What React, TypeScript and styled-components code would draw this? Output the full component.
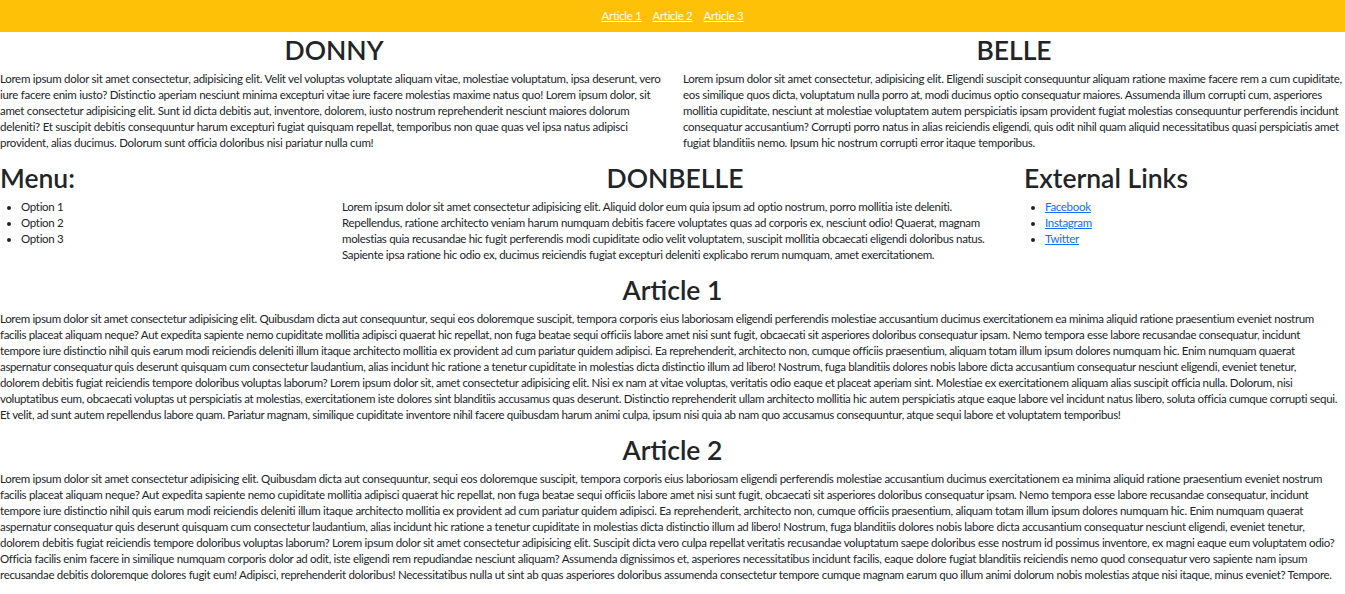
import React from "react";
import styled, { createGlobalStyle } from "styled-components";

const GlobalStyle = createGlobalStyle`
  html, body {
    margin: 0;
    padding: 0;
    background: #ffffff;
  }
  body {
    font-family: "Lato", "Liberation Sans", sans-serif;
    font-size: 11.5px;
    letter-spacing: -0.31px;
    line-height: 16px;
    color: #212529;
  }
`;

const Navbar = styled.nav`
  height: 32px;
  background: #ffc107;
  display: flex;
  justify-content: center;
  align-items: center;
  gap: 11px;
`;

const NavLink = styled.a`
  color: #ffffff;
  text-decoration: underline;
  font-size: 11.5px;
`;

const Main = styled.main`
  display: flex;
  flex-direction: column;
  gap: 10px;
  padding-top: 1px;
`;

const TwoCol = styled.div`
  display: grid;
  grid-template-columns: 668px 1fr;
  column-gap: 15px;
`;

const ThreeCol = styled.div`
  display: grid;
  grid-template-columns: 326px 666px 1fr;
  column-gap: 16px;
`;

const Section = styled.section`
  display: flex;
  flex-direction: column;
  gap: 4px;
  min-width: 0;
`;

const Heading = styled.h2<{ $align?: "left" | "center" }>`
  margin: 0;
  font-size: 26.5px;
  line-height: 34px;
  font-weight: 600;
  letter-spacing: 0;
  text-align: ${(p) => p.$align ?? "center"};
  color: #212529;
`;

const Text = styled.p<{ $tracking?: number }>`
  margin: 0;
  letter-spacing: ${(p) => p.$tracking ?? -0.31}px;
`;

const List = styled.ul`
  margin: 0;
  padding-left: 21px;
`;

const Item = styled.li``;

const ExtLink = styled.a`
  color: #0d6efd;
  text-decoration: underline;
`;

const DONNY =
  "Lorem ipsum dolor sit amet consectetur, adipisicing elit. Velit vel voluptas voluptate aliquam vitae, molestiae voluptatum, ipsa deserunt, vero iure facere enim iusto? Distinctio aperiam nesciunt minima excepturi vitae iure facere molestias maxime natus quo! Lorem ipsum dolor, sit amet consectetur adipisicing elit. Sunt id dicta debitis aut, inventore, dolorem, iusto nostrum reprehenderit nesciunt maiores dolorum deleniti? Et suscipit debitis consequuntur harum excepturi fugiat quisquam repellat, temporibus non quae quas vel ipsa natus adipisci provident, alias ducimus. Dolorum sunt officia doloribus nisi pariatur nulla cum!";

const BELLE =
  "Lorem ipsum dolor sit amet consectetur, adipisicing elit. Eligendi suscipit consequuntur aliquam ratione maxime facere rem a cum cupiditate, eos similique quos dicta, voluptatum nulla porro at, modi ducimus optio consequatur maiores. Assumenda illum corrupti cum, asperiores mollitia cupiditate, nesciunt at molestiae voluptatem autem perspiciatis ipsam provident fugiat molestias consequuntur perferendis incidunt consequatur accusantium? Corrupti porro natus in alias reiciendis eligendi, quis odit nihil quam aliquid necessitatibus quasi perspiciatis amet fugiat blanditiis nemo. Ipsum hic nostrum corrupti error itaque temporibus.";

const DONBELLE =
  "Lorem ipsum dolor sit amet consectetur adipisicing elit. Aliquid dolor eum quia ipsum ad optio nostrum, porro mollitia iste deleniti. Repellendus, ratione architecto veniam harum numquam debitis facere voluptates quas ad corporis ex, nesciunt odio! Quaerat, magnam molestias quia recusandae hic fugit perferendis modi cupiditate odio velit voluptatem, suscipit mollitia obcaecati eligendi doloribus natus. Sapiente ipsa ratione hic odio ex, ducimus reiciendis fugiat excepturi deleniti explicabo rerum numquam, amet exercitationem.";

const COMMON =
  "Lorem ipsum dolor sit amet consectetur adipisicing elit. Quibusdam dicta aut consequuntur, sequi eos doloremque suscipit, tempora corporis eius laboriosam eligendi perferendis molestiae accusantium ducimus exercitationem ea minima aliquid ratione praesentium eveniet nostrum facilis\u00a0placeat aliquam neque? Aut expedita sapiente nemo cupiditate mollitia adipisci quaerat hic repellat, non fuga beatae sequi officiis labore amet nisi sunt fugit, obcaecati sit asperiores doloribus consequatur ipsam. Nemo tempora esse labore recusandae consequatur, incidunt tempore\u00a0iure distinctio nihil quis earum modi reiciendis deleniti illum itaque architecto mollitia ex provident ad cum pariatur quidem adipisci. Ea reprehenderit, architecto non, cumque officiis praesentium, aliquam totam illum ipsum dolores numquam hic. Enim numquam quaerat aspernatur consequatur quis deserunt quisquam cum consectetur laudantium, alias incidunt hic ratione a tenetur cupiditate in molestias dicta distinctio illum ad libero! Nostrum, fuga blanditiis dolores nobis labore dicta accusantium consequatur nesciunt eligendi, eveniet tenetur, dolorem\u00a0debitis fugiat reiciendis tempore doloribus voluptas laborum? ";

const ARTICLE1 =
  COMMON +
  "Lorem ipsum dolor sit, amet consectetur adipisicing elit. Nisi ex nam at vitae voluptas, veritatis odio eaque et placeat aperiam sint. Molestiae ex exercitationem aliquam alias suscipit officia nulla. Dolorum, nisi voluptatibus eum, obcaecati voluptas ut perspiciatis at molestias, exercitationem iste dolores sint blanditiis accusamus quas deserunt. Distinctio reprehenderit ullam architecto mollitia hic autem perspiciatis atque eaque labore vel incidunt natus libero, soluta officia cumque corrupti sequi. Et velit, ad sunt autem repellendus labore quam. Pariatur magnam, similique cupiditate inventore nihil facere quibusdam harum animi culpa, ipsum nisi quia ab nam quo accusamus consequuntur, atque sequi labore et voluptatem temporibus!";

const ARTICLE2 =
  COMMON +
  "Lorem ipsum dolor sit amet consectetur adipisicing elit. Suscipit dicta vero culpa repellat veritatis recusandae voluptatum saepe doloribus esse nostrum id possimus inventore, ex magni eaque eum voluptatem odio? Officia facilis enim facere in similique numquam corporis dolor ad odit, iste eligendi rem repudiandae nesciunt aliquam? Assumenda dignissimos et, asperiores necessitatibus incidunt facilis, eaque dolore fugiat blanditiis reiciendis nemo quod consequatur vero sapiente nam ipsum recusandae debitis doloremque dolores fugit eum! Adipisci, reprehenderit doloribus! Necessitatibus nulla ut sint ab quas asperiores doloribus assumenda consectetur tempore cumque magnam earum quo illum animi dolorum nobis molestias atque nisi itaque, minus eveniet? Tempore.";

export default function App() {
  return (
    <>
      <GlobalStyle />
      <Navbar>
        <NavLink href="#article1">Article 1</NavLink>
        <NavLink href="#article2">Article 2</NavLink>
        <NavLink href="#article3">Article 3</NavLink>
      </Navbar>
      <Main>
        <TwoCol>
          <Section>
            <Heading>DONNY</Heading>
            <Text $tracking={-0.28}>{DONNY}</Text>
          </Section>
          <Section>
            <Heading>BELLE</Heading>
            <Text>{BELLE}</Text>
          </Section>
        </TwoCol>
        <ThreeCol>
          <Section>
            <Heading $align="left">Menu:</Heading>
            <List>
              <Item>Option 1</Item>
              <Item>Option 2</Item>
              <Item>Option 3</Item>
            </List>
          </Section>
          <Section>
            <Heading>DONBELLE</Heading>
            <Text>{DONBELLE}</Text>
          </Section>
          <Section>
            <Heading $align="left">External Links</Heading>
            <List>
              <Item>
                <ExtLink href="#">Facebook</ExtLink>
              </Item>
              <Item>
                <ExtLink href="#">Instagram</ExtLink>
              </Item>
              <Item>
                <ExtLink href="#">Twitter</ExtLink>
              </Item>
            </List>
          </Section>
        </ThreeCol>
        <Section id="article1">
          <Heading>Article 1</Heading>
          <Text $tracking={-0.34}>{ARTICLE1}</Text>
        </Section>
        <Section id="article2">
          <Heading>Article 2</Heading>
          <Text>{ARTICLE2}</Text>
        </Section>
      </Main>
    </>
  );
}
